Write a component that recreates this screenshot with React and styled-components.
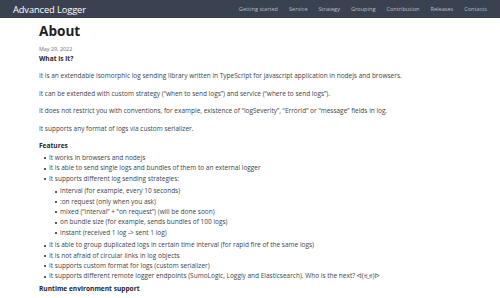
import React from 'react';
import styled, { createGlobalStyle } from 'styled-components';

const GlobalStyle = createGlobalStyle`
  html, body {
    margin: 0;
    padding: 0;
    background: #fff;
  }
  body {
    font-family: "Open Sans", "DejaVu Sans", sans-serif;
    color: #3b3f47;
  }
`;

const TopBar = styled.header`
  height: 18px;
  background: #3a4252;
  display: flex;
  align-items: center;
  justify-content: space-between;
  padding: 0 13px;
`;

const Brand = styled.a`
  color: #ffffff;
  font-size: 9.3px;
  text-decoration: none;
  letter-spacing: -0.1px;
`;

const Nav = styled.nav`
  display: flex;
  gap: 11px;
`;

const NavLink = styled.a`
  color: #b9bec8;
  font-size: 5.6px;
  text-decoration: none;
`;

const Main = styled.main`
  max-width: 422px;
  margin: 0 auto;
  padding: 3px 0 0;
`;

const Title = styled.h1`
  font-size: 13.6px;
  font-weight: 700;
  color: #1d1f26;
  margin: 0;
  line-height: 20px;
`;

const Date = styled.div`
  font-size: 5.4px;
  line-height: 7.5px;
  color: #6b6f77;
  margin: 5px 0 0;
`;

const Heading = styled.h3`
  font-size: 6.6px;
  font-weight: 700;
  color: #23262d;
  margin: 0 0 2px;
  line-height: 10px;
`;

const Para = styled.p`
  font-size: 6.5px;
  line-height: 10px;
  margin: 7.5px 0;
`;

const List = styled.ul`
  margin: ${p => (p.nested ? '2.5px 0 2.5px' : '0 0 2px')};
  padding-left: ${p => (p.nested ? '11px' : '10px')};
  list-style: none;
`;

const Item = styled.li`
  font-size: 6.5px;
  line-height: 10.3px;
  position: relative;
  &::before {
    content: '';
    position: absolute;
    left: -5px;
    top: 4.3px;
    width: 2px;
    height: 2px;
    background: #555a63;
  }
`;

const links = ['Getting started', 'Service', 'Strategy', 'Grouping', 'Contribution', 'Releases', 'Contacts'];

export default function App() {
  return (
    <>
      <GlobalStyle />
      <TopBar>
        <Brand href="#">Advanced Logger</Brand>
        <Nav>
          {links.map(l => (
            <NavLink key={l} href="#">{l}</NavLink>
          ))}
        </Nav>
      </TopBar>
      <Main>
        <Title>About</Title>
        <Date>May 29, 2022</Date>
        <Heading>What is it?</Heading>
        <Para>It is an extendable isomorphic log sending library written in TypeScript for javascript application in nodejs and browsers.</Para>
        <Para>It can be extended with custom strategy (“when to send logs”) and service (“where to send logs”).</Para>
        <Para>It does not restrict you with conventions, for example, existence of “logSeverity”, “ErrorId” or “message” fields in log.</Para>
        <Para>It supports any format of logs via custom serializer.</Para>
        <Heading>Features</Heading>
        <List>
          <Item>It works in browsers and nodejs</Item>
          <Item>It is able to send single logs and bundles of them to an external logger</Item>
          <Item>
            It supports different log sending strategies:
            <List nested>
              <Item>interval (for example, every 10 seconds)</Item>
              <Item>:on request (only when you ask)</Item>
              <Item>mixed (“interval” + “on request”) (will be done soon)</Item>
              <Item>on bundle size (for example, sends bundles of 100 logs)</Item>
              <Item>instant (received 1 log -&gt; sent 1 log)</Item>
            </List>
          </Item>
          <Item>It is able to group duplicated logs in certain time interval (for rapid fire of the same logs)</Item>
          <Item>It is not afraid of circular links in log objects</Item>
          <Item>It supports custom format for logs (custom serializer)</Item>
          <Item>It supports different remote logger endpoints (SumoLogic, Loggly and Elasticsearch). Who is the next? ᐊ(ಠ_ಠ)ᐅ</Item>
        </List>
        <Heading>Runtime environment support</Heading>
        <Para>Builds are generated as ES2015 bundles for nodejs and browser environments.</Para>
      </Main>
    </>
  );
}
